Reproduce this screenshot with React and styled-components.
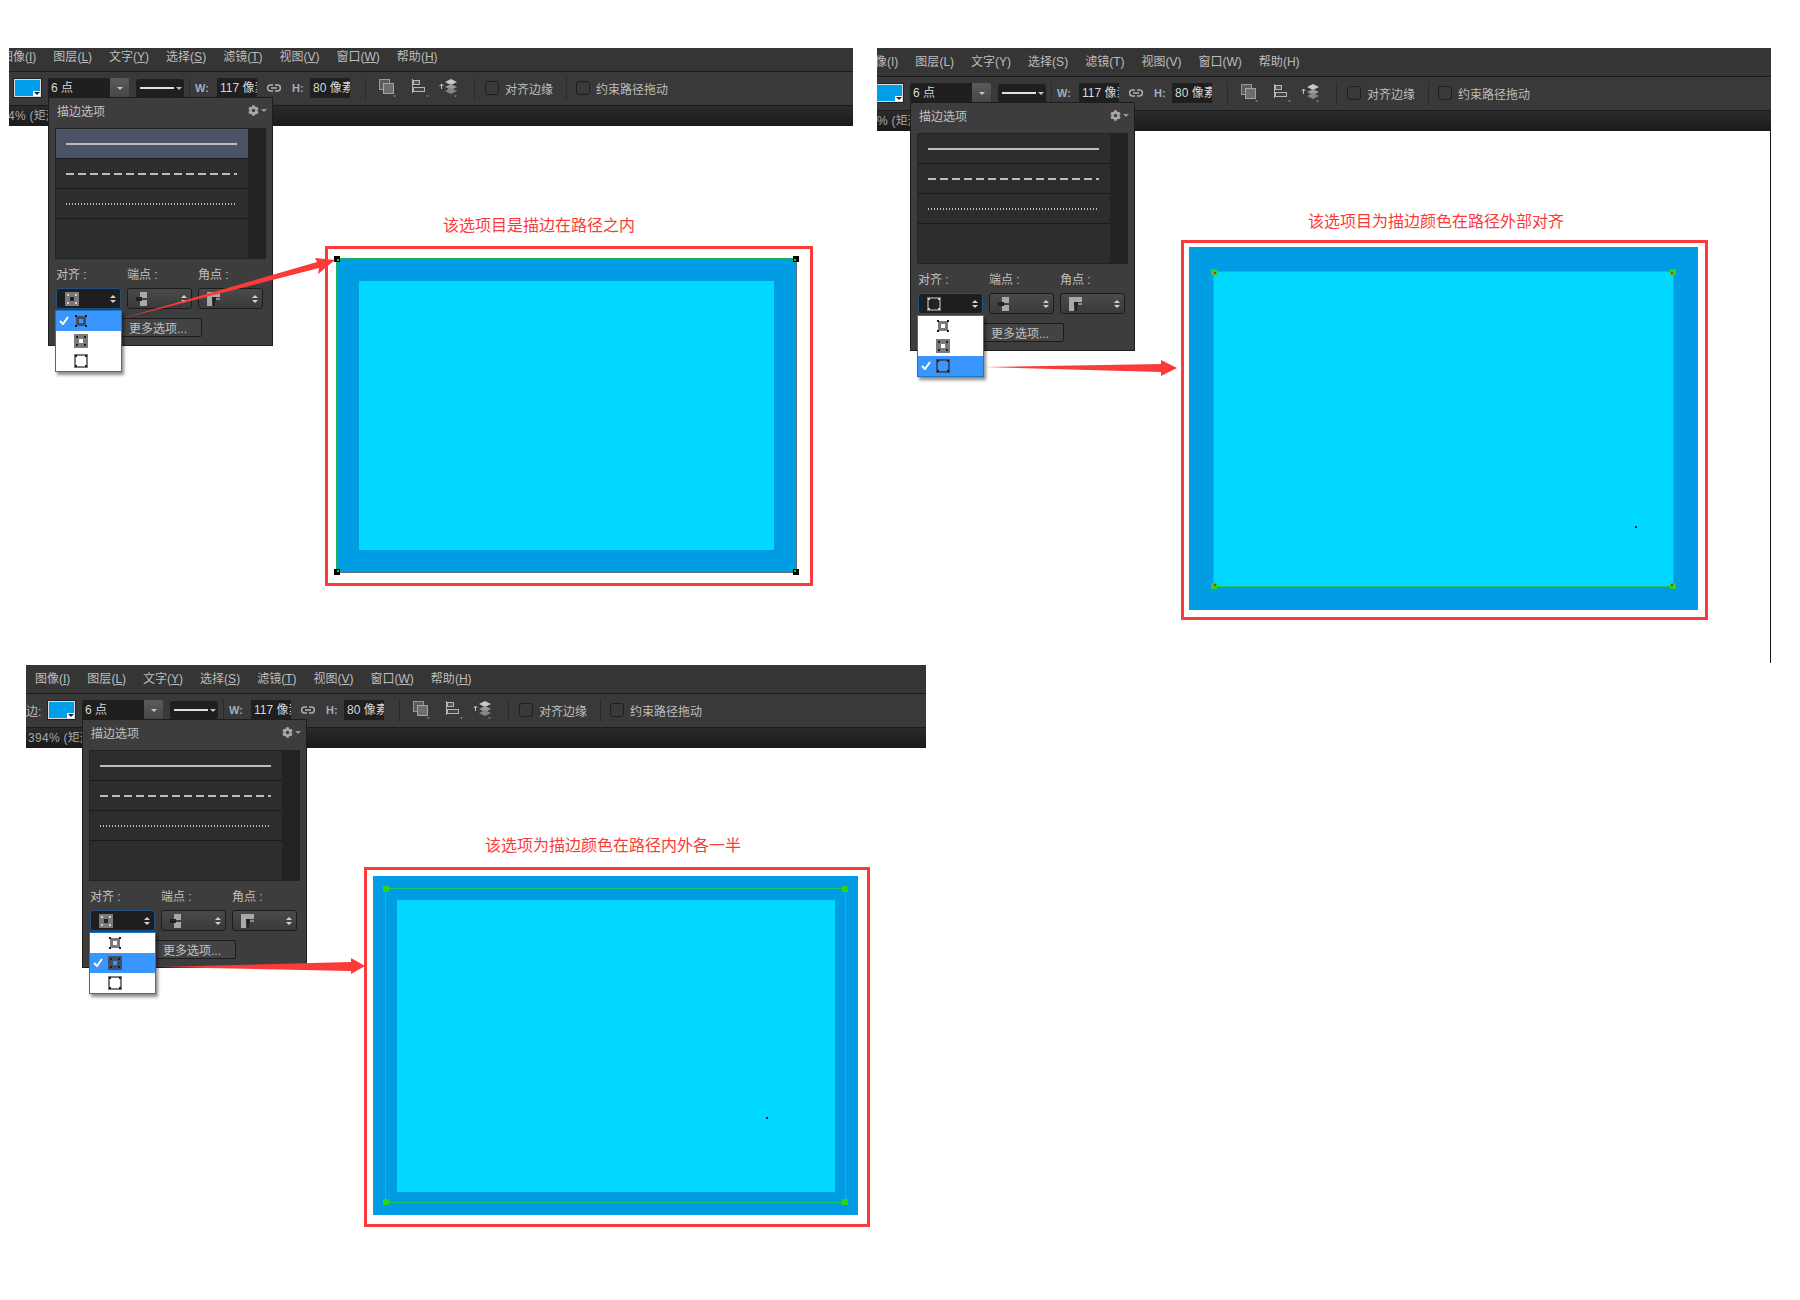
import styled, { createGlobalStyle } from "styled-components";
import { FaCog } from "react-icons/fa";

const GlobalStyle = createGlobalStyle`
  html, body {
    margin: 0;
    background: #fff;
    font-family: "Liberation Sans", "Noto Sans CJK SC", sans-serif;
  }
`;

const RED = "#fb3a3a";

const Page = styled.div`
  width: 1800px;
  height: 1300px;
  padding-top: 48px;
  box-sizing: border-box;
  overflow: hidden;
`;

const TopRow = styled.div`
  display: flex;
  height: 617px;
`;

const Scene = styled.section`
  position: relative;
  flex: none;
  width: ${(p) => p.$width}px;
  margin-left: ${(p) => p.$left}px;
`;

/* ---------- application bar ---------- */

const AppBar = styled.div`
  display: flex;
  flex-direction: column;
  overflow: hidden;
  color: #bdbdbd;
  font-size: 12px;
`;

const MenuRow = styled.div`
  display: flex;
  align-items: flex-end;
  gap: 17px;
  flex: none;
  box-sizing: border-box;
  height: ${(p) => p.$height}px;
  padding-bottom: 5px;
  background: #353535;
  border-bottom: 1px solid #1b1b1b;
  line-height: 18px;
  white-space: nowrap;
  & > :first-child {
    margin-left: ${(p) => p.$shift + 9}px;
  }
`;

const OptionsRow = styled.div`
  display: flex;
  align-items: center;
  flex: none;
  box-sizing: border-box;
  height: 34px;
  padding-bottom: 1px;
  background: #393939;
  border-bottom: 1px solid #1b1b1b;
  white-space: nowrap;
  & > :first-child {
    margin-left: ${(p) => p.$shift}px;
  }
`;

const StatusRow = styled.div`
  flex: none;
  box-sizing: border-box;
  height: 20px;
  background: linear-gradient(#2b2b2b, #1a1a1a);
  color: #a8a8a8;
  line-height: 20px;
  white-space: nowrap;
`;

const StatusText = styled.div`
  width: 54px;
  margin-left: ${(p) => p.$shift + 2}px;
  overflow: hidden;
  letter-spacing: 0.3px;
`;

const StrokeLabel = styled.span`
  flex: none;
  width: 22px;
`;

const Swatch = styled.div`
  position: relative;
  flex: none;
  box-sizing: border-box;
  width: 27px;
  height: 18px;
  background: #009de8;
  border: 1px solid #dcdcdc;
  outline: 1px solid #222;
`;

const SwatchCorner = styled.span`
  position: absolute;
  right: 0;
  bottom: 0;
  width: 7px;
  height: 5px;
  background: #fff;
  &::after {
    content: "";
    position: absolute;
    left: 1px;
    top: 1px;
    border: 3px solid transparent;
    border-top-color: #222;
    border-bottom: 0;
  }
`;

const SizeBox = styled.div`
  display: flex;
  flex: none;
  width: 81px;
  height: 20px;
  margin-left: 7px;
  border-radius: 2px;
  overflow: hidden;
`;

const SizeValue = styled.span`
  flex: 1;
  padding-left: 3px;
  background: #1f1f1f;
  color: #d8d8d8;
  line-height: 20px;
`;

const Caret = styled.span`
  display: inline-block;
  flex: none;
  border: 3px solid transparent;
  border-top: 3px solid ${(p) => p.$color || "#c4c4c4"};
  border-bottom: 0;
`;

const SizeButton = styled.span`
  display: flex;
  align-items: center;
  justify-content: center;
  flex: none;
  width: 19px;
  background: linear-gradient(#5b5b5b, #464646);
`;

const StrokeBox = styled.div`
  display: flex;
  align-items: center;
  gap: 2px;
  flex: none;
  box-sizing: border-box;
  width: 48px;
  height: 19px;
  margin-left: 7px;
  padding-left: 4px;
  background: #1f1f1f;
  border-radius: 3px;
`;

const StrokeSample = styled.span`
  width: 34px;
  height: 2px;
  background: #e0e0e0;
`;

const Separator = styled.span`
  flex: none;
  width: 1px;
  height: 23px;
  margin-left: ${(p) => p.$ml}px;
  background: #2a2a2a;
`;

const FieldLabel = styled.span`
  flex: none;
  width: 13px;
  margin-left: ${(p) => p.$ml}px;
  color: #9fb0c0;
  font-weight: 700;
  font-size: 11px;
`;

const NumberField = styled.div`
  flex: none;
  box-sizing: border-box;
  width: 40px;
  height: 20px;
  margin-left: ${(p) => p.$ml}px;
  padding-left: 3px;
  overflow: hidden;
  background: #1f1f1f;
  color: #d8d8d8;
  line-height: 20px;
`;

const BarIcon = styled.svg`
  flex: none;
  display: block;
  margin-left: ${(p) => p.$ml}px;
`;

const CheckBox = styled.span`
  flex: none;
  box-sizing: border-box;
  width: 14px;
  height: 14px;
  margin-left: ${(p) => p.$ml}px;
  background: #3a3a3a;
  border: 1px solid #1e1e1e;
  border-radius: 3px;
`;

const CheckLabel = styled.span`
  flex: none;
  margin-left: 6px;
`;

/* ---------- stroke options panel ---------- */

const Panel = styled.div`
  position: absolute;
  left: ${(p) => p.$left}px;
  top: ${(p) => p.$top}px;
  display: flex;
  flex-direction: column;
  box-sizing: border-box;
  width: 225px;
  height: 249px;
  background: #3d3d3d;
  border: 1px solid #1d1d1d;
  color: #c2c2c2;
  font-size: 12px;
`;

const PanelHeader = styled.div`
  display: flex;
  align-items: center;
  justify-content: space-between;
  flex: none;
  box-sizing: border-box;
  height: 30px;
  padding: 0 5px 5px 8px;
`;

const GearButton = styled.span`
  display: flex;
  align-items: center;
  gap: 2px;
  color: #a8a8a8;
  font-size: 11px;
`;

const StyleList = styled.div`
  display: flex;
  flex: none;
  box-sizing: border-box;
  width: 211px;
  height: 131px;
  margin-left: 6px;
  background: #232323;
  border: 1px solid #222;
`;

const StyleRows = styled.div`
  display: flex;
  flex-direction: column;
  flex: none;
  width: 192px;
  background: #2d2d2d;
`;

const StyleRow = styled.div`
  display: flex;
  align-items: center;
  flex: none;
  box-sizing: border-box;
  height: 30px;
  padding-left: 10px;
  background: ${(p) => (p.$selected ? "#4b5367" : "#2d2d2d")};
  border-bottom: 1px solid #1a1a1a;
`;

const StyleLine = styled.span`
  width: 171px;
  height: 2px;
  background: ${(p) =>
    p.$kind === "solid"
      ? "#bcbcbc"
      : p.$kind === "dashed"
        ? "repeating-linear-gradient(90deg, #bcbcbc 0 8px, transparent 8px 12px)"
        : "repeating-linear-gradient(90deg, #bcbcbc 0 1px, transparent 1px 3px)"};
`;

const FieldGrid = styled.div`
  display: grid;
  grid-template-columns: repeat(3, 65px);
  column-gap: 6px;
  flex: none;
  margin: 9px 0 0 7px;
`;

const FieldCaption = styled.span`
  height: 14px;
  margin-bottom: 6px;
  line-height: 14px;
`;

const SelectCell = styled.div`
  position: relative;
`;

const SelectBox = styled.div`
  display: flex;
  align-items: center;
  justify-content: space-between;
  box-sizing: border-box;
  height: 21px;
  padding: 0 4px 0 8px;
  background: ${(p) => (p.$open ? "#1e1e1e" : "linear-gradient(#4a4a4a, #3a3a3a)")};
  border: 1px solid ${(p) => (p.$open ? "#24507f" : "#1c1c1c")};
  border-radius: 3px;
`;

const SpinArrows = styled.span`
  display: flex;
  flex-direction: column;
  gap: 2px;
  &::before,
  &::after {
    content: "";
    border: 3px solid transparent;
  }
  &::before {
    border-bottom: 3px solid #d0d0d0;
    border-top: 0;
  }
  &::after {
    border-top: 3px solid #d0d0d0;
    border-bottom: 0;
  }
`;

const Dropdown = styled.div`
  position: absolute;
  top: 22px;
  left: -1px;
  z-index: 3;
  box-sizing: border-box;
  width: 67px;
  background: #fff;
  border: 1px solid #1a78c8;
  box-shadow: 2px 3px 3px rgba(0, 0, 0, 0.45);
`;

const DropdownRow = styled.div`
  position: relative;
  display: flex;
  align-items: center;
  height: 20px;
  padding-left: 18px;
  background: ${(p) => (p.$active ? "#3a96ff" : "#fff")};
`;

const CheckMark = styled.svg`
  position: absolute;
  left: 3px;
  top: 5px;
`;

const MoreButton = styled.button`
  display: block;
  flex: none;
  box-sizing: border-box;
  width: 81px;
  height: 19px;
  margin: 9px 0 0 72px;
  padding: 0 0 0 7px;
  background: #434343;
  border: 1px solid #1c1c1c;
  border-radius: 2px;
  color: #c2c2c2;
  font: inherit;
  text-align: left;
`;

/* ---------- stroke demonstration ---------- */

const Demo = styled.div`
  margin: ${(p) => p.$top}px 0 0 ${(p) => p.$left}px;
`;

const Caption = styled.div`
  margin: 0 0 ${(p) => p.$below}px ${(p) => p.$left}px;
  color: ${RED};
  font-size: 16px;
  line-height: 24px;
  white-space: nowrap;
`;

const RedFrame = styled.div`
  display: inline-block;
  padding: ${(p) => p.$pad};
  border: 3px solid ${RED};
`;

const StrokeBlue = styled.div`
  position: relative;
  padding: ${(p) => p.$pad};
  background: #009de5;
`;

const FillCyan = styled.div`
  position: relative;
  width: ${(p) => p.$w}px;
  height: ${(p) => p.$h}px;
  background: #00d8ff;
`;

const StrayPixel = styled.i`
  position: absolute;
  left: ${(p) => p.$x}px;
  top: ${(p) => p.$y}px;
  width: 2px;
  height: 2px;
  background: #0a3040;
`;

const PathOutline = styled.div`
  position: absolute;
  inset: ${(p) => p.$inset};
  border: 1px solid;
  border-color: ${(p) => p.$near} ${(p) => p.$far} ${(p) => p.$far} ${(p) => p.$near};
`;

const Handle = styled.i`
  position: absolute;
  width: 6px;
  height: 6px;
  ${(p) => (p.$top ? "top: -3px" : "bottom: -3px")};
  ${(p) => (p.$lft ? "left: -3px" : "right: -3px")};
  background: ${(p) => p.$color};
  &::after {
    content: "";
    position: absolute;
    left: ${(p) => (p.$lft ? 3 : 1)}px;
    top: ${(p) => (p.$top ? 3 : 1)}px;
    width: 2px;
    height: 2px;
    background: ${(p) => p.$dot};
  }
`;

const Arrow = styled.svg`
  position: absolute;
  left: 0;
  top: 0;
  z-index: 2;
  pointer-events: none;
  overflow: visible;
`;

const EdgeLine = styled.div`
  position: absolute;
  right: 0;
  top: 83px;
  width: 1px;
  height: 532px;
  background: #141414;
`;

/* ---------- drawings ---------- */

function AlignIcon({ kind, dark, active }) {
  const ring = dark ? "#7a7a7a" : active ? "#3f4f66" : "#7a7a7a";
  const hole = dark ? "#222" : active ? "#3a96ff" : "#fff";
  const mark = dark ? "#d0d0d0" : "#1c1c1c";
  const box =
    kind === "inside"
      ? { outer: [2, 10], inner: [5, 4], near: 1, far: 11 }
      : kind === "center"
        ? { outer: [0, 14], inner: [5, 4], near: 2, far: 10 }
        : { outer: [0, 14], inner: [2, 10], near: 1, far: 11 };
  return (
    <svg width="14" height="14" viewBox="0 0 14 14" shapeRendering="crispEdges">
      <rect x={box.outer[0]} y={box.outer[0]} width={box.outer[1]} height={box.outer[1]} fill={ring} />
      <rect x={box.inner[0]} y={box.inner[0]} width={box.inner[1]} height={box.inner[1]} fill={hole} />
      {[box.near, box.far].flatMap((x) =>
        [box.near, box.far].map((y) => (
          <rect key={`${x}-${y}`} x={x} y={y} width="2" height="2" fill={mark} />
        ))
      )}
    </svg>
  );
}

function CapIcon() {
  return (
    <svg width="11" height="14" viewBox="0 0 11 14">
      <rect x="4" y="0" width="7" height="6" fill="#a8a8a8" />
      <rect x="4" y="8" width="7" height="6" fill="#a8a8a8" />
      <rect x="0" y="5" width="6" height="4" fill="#222" />
    </svg>
  );
}

function CornerIcon() {
  return (
    <svg width="13" height="14" viewBox="0 0 13 14">
      <path d="M0 0h13v5H6v1H5v8H0z" fill="#a8a8a8" />
      <path d="M9 6h4v2H9z" fill="#8c8c8c" />
      <path d="M5 5h4v4H8v5H6V9H5z" fill="#222" />
    </svg>
  );
}

function OverlapIcon({ ml }) {
  return (
    <BarIcon $ml={ml} width="17" height="18" viewBox="0 0 17 18">
      <rect x="0.5" y="0.5" width="10" height="10" fill="#5c5c5c" stroke="#9a9a9a" />
      <rect x="4.5" y="4.5" width="10" height="10" fill="#6e6e6e" stroke="#a4a4a4" />
      <path d="M14 16.5h3l-1.5 1.5z" fill="#999" />
    </BarIcon>
  );
}

function AlignLeftIcon({ ml }) {
  return (
    <BarIcon $ml={ml} width="17" height="18" viewBox="0 0 17 18">
      <path d="M0.5 0v14" stroke="#b5b5b5" />
      <rect x="1.5" y="1.5" width="6" height="4" fill="#555" stroke="#b5b5b5" />
      <rect x="1.5" y="8.5" width="11" height="4" fill="#444" stroke="#b5b5b5" />
      <path d="M14 16.5h3l-1.5 1.5z" fill="#999" />
    </BarIcon>
  );
}

function StackIcon({ ml }) {
  return (
    <BarIcon $ml={ml} width="19" height="18" viewBox="0 0 19 18">
      <path d="M2.5 10V5M0.5 7l2-2 2 2" stroke="#c4c4c4" fill="none" />
      <path d="M12 0l6 3-6 3-6-3z" fill="#c8c8c8" />
      <path d="M12 5l6 3-6 3-6-3z" fill="#9a9a9a" />
      <path d="M12 9l6 3-6 3-6-3z" fill="#858585" />
      <path d="M15 16.5h3l-1.5 1.5z" fill="#999" />
    </BarIcon>
  );
}

function LinkIcon({ ml }) {
  return (
    <BarIcon $ml={ml} width="14" height="8" viewBox="0 0 14 8">
      <path d="M6 1H3.5a3 3 0 0 0 0 6H6M8 1h2.5a3 3 0 0 1 0 6H8M4 4h6" fill="none" stroke="#b0b0b0" strokeWidth="1.6" />
    </BarIcon>
  );
}

/* ---------- data ---------- */

const MENU = [
  ["图像", "I"],
  ["图层", "L"],
  ["文字", "Y"],
  ["选择", "S"],
  ["滤镜", "T"],
  ["视图", "V"],
  ["窗口", "W"],
  ["帮助", "H"],
];

const ALIGN_KINDS = ["inside", "center", "outside"];

function Toolbar({ menuHeight, shift, underline, activeAlign, shownAlign, selectedLine }) {
  return (
    <>
      <AppBar>
        <MenuRow $height={menuHeight} $shift={shift}>
          {MENU.map(([label, key]) => (
            <span key={key}>
              {label}({underline ? <u>{key}</u> : key})
            </span>
          ))}
        </MenuRow>
        <OptionsRow $shift={shift}>
          <StrokeLabel>边:</StrokeLabel>
          <Swatch>
            <SwatchCorner />
          </Swatch>
          <SizeBox>
            <SizeValue>6 点</SizeValue>
            <SizeButton>
              <Caret />
            </SizeButton>
          </SizeBox>
          <StrokeBox>
            <StrokeSample />
            <Caret />
          </StrokeBox>
          <Separator $ml={5} />
          <FieldLabel $ml={5}>W:</FieldLabel>
          <NumberField $ml={9}>117 像素</NumberField>
          <LinkIcon ml={10} />
          <FieldLabel $ml={11}>H:</FieldLabel>
          <NumberField $ml={5}>80 像素</NumberField>
          <Separator $ml={15} />
          <OverlapIcon ml={13} />
          <AlignLeftIcon ml={16} />
          <StackIcon ml={10} />
          <Separator $ml={16} />
          <CheckBox $ml={10} />
          <CheckLabel>对齐边缘</CheckLabel>
          <Separator $ml={13} />
          <CheckBox $ml={9} />
          <CheckLabel>约束路径拖动</CheckLabel>
        </OptionsRow>
        <StatusRow>
          <StatusText $shift={shift}>394% (矩形</StatusText>
        </StatusRow>
      </AppBar>
      <Panel $left={shift + 56} $top={menuHeight + 25}>
        <PanelHeader>
          <span>描边选项</span>
          <GearButton>
            <FaCog />
            <Caret $color="#999" />
          </GearButton>
        </PanelHeader>
        <StyleList>
          <StyleRows>
            {["solid", "dashed", "dotted"].map((kind, i) => (
              <StyleRow key={kind} $selected={selectedLine === i}>
                <StyleLine $kind={kind} />
              </StyleRow>
            ))}
          </StyleRows>
        </StyleList>
        <FieldGrid>
          <FieldCaption>对齐 :</FieldCaption>
          <FieldCaption>端点 :</FieldCaption>
          <FieldCaption>角点 :</FieldCaption>
          <SelectCell>
            <SelectBox $open>
              <AlignIcon kind={shownAlign} dark />
              <SpinArrows />
            </SelectBox>
            <Dropdown>
              {ALIGN_KINDS.map((kind, i) => (
                <DropdownRow key={kind} $active={activeAlign === i}>
                  {activeAlign === i && (
                    <CheckMark width="10" height="9" viewBox="0 0 10 9">
                      <path d="M1 5l3 3 5-7" fill="none" stroke="#fff" strokeWidth="2" />
                    </CheckMark>
                  )}
                  <AlignIcon kind={kind} active={activeAlign === i} />
                </DropdownRow>
              ))}
            </Dropdown>
          </SelectCell>
          <SelectCell>
            <SelectBox>
              <CapIcon />
              <SpinArrows />
            </SelectBox>
          </SelectCell>
          <SelectCell>
            <SelectBox>
              <CornerIcon />
              <SpinArrows />
            </SelectBox>
          </SelectCell>
        </FieldGrid>
        <MoreButton type="button">更多选项...</MoreButton>
      </Panel>
    </>
  );
}

function Handles({ color, dot }) {
  return (
    <>
      <Handle $top $lft $color={color} $dot={dot} />
      <Handle $top $color={color} $dot={dot} />
      <Handle $lft $color={color} $dot={dot} />
      <Handle $color={color} $dot={dot} />
    </>
  );
}

export default function App() {
  return (
    <Page>
      <GlobalStyle />
      <TopRow>
        <Scene $left={9} $width={844}>
          <Toolbar menuHeight={24} shift={-17} underline activeAlign={0} shownAlign="center" selectedLine={0} />
          <Demo $top={88} $left={316}>
            <Caption $left={118} $below={8}>该选项目是描边在路径之内</Caption>
            <RedFrame $pad="9px 13px 10px 8px">
              <StrokeBlue $pad="23px">
                <FillCyan $w={415} $h={269} />
                <PathOutline $inset="0" $near="#17b85a" $far="#5f6f78">
                  <Handles color="#000" dot="#2bd416" />
                </PathOutline>
              </StrokeBlue>
            </RedFrame>
          </Demo>
          <Arrow width="1" height="1">
            <polygon points="111,271 308,214 306,210 326,212 309,226 310,220" fill={RED} />
          </Arrow>
        </Scene>
        <Scene $left={24} $width={894}>
          <Toolbar menuHeight={29} shift={-23} activeAlign={2} shownAlign="outside" />
          <Demo $top={79} $left={304}>
            <Caption $left={127} $below={6}>该选项目为描边颜色在路径外部对齐</Caption>
            <RedFrame $pad="4px 7px 7px 5px">
              <StrokeBlue $pad="24px 24px 23px 24px">
                <FillCyan $w={461} $h={316}>
                  <StrayPixel $x={422} $y={255} />
                </FillCyan>
                <PathOutline $inset="24px 24px 23px 24px" $near="#c9705a" $far="#1fc36a">
                  <Handles color="#2bd416" dot="#f01818" />
                </PathOutline>
              </StrokeBlue>
            </RedFrame>
          </Demo>
          <Arrow width="1" height="1">
            <polygon points="108,319 284,316 284,312 300,320 284,328 284,324" fill={RED} />
          </Arrow>
          <EdgeLine />
        </Scene>
      </TopRow>
      <Scene $left={26} $width={900}>
        <Toolbar menuHeight={29} shift={0} underline activeAlign={1} shownAlign="center" />
        <Demo $top={86} $left={338}>
          <Caption $left={121} $below={9}>该选项为描边颜色在路径内外各一半</Caption>
          <RedFrame $pad="6px 9px 9px 6px">
            <StrokeBlue $pad="24px 23px 23px 24px">
              <FillCyan $w={438} $h={292}>
                <StrayPixel $x={369} $y={217} />
              </FillCyan>
              <PathOutline $inset="12px" $near="#20c46a" $far="#20c46a">
                <Handles color="#2bd416" dot="#2bd416" />
              </PathOutline>
            </StrokeBlue>
          </RedFrame>
        </Demo>
        <Arrow width="1" height="1">
          <polygon points="132,302 325,297 325,293 339,301 325,309 325,306" fill={RED} />
        </Arrow>
      </Scene>
    </Page>
  );
}
